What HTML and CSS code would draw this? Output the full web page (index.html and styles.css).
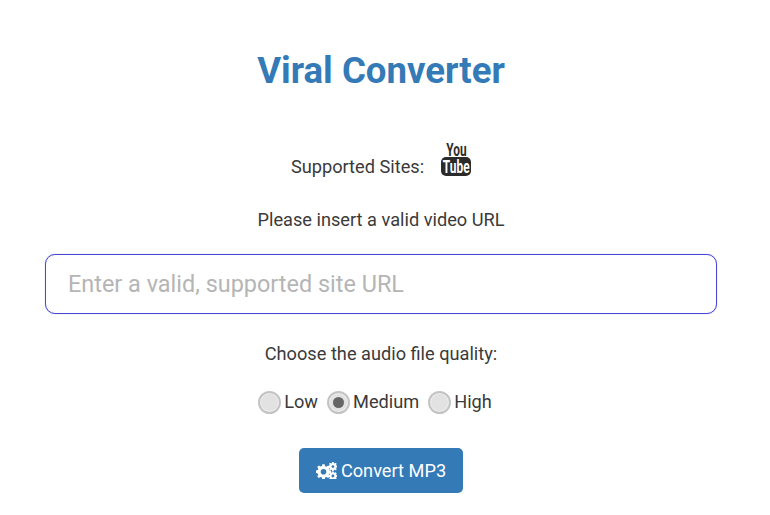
FILE: index.html
```html
<!DOCTYPE html>
<html lang="en">
<head>
<meta charset="utf-8">
<title>Viral Converter</title>
<link rel="stylesheet" href="styles.css">
</head>
<body>
<main class="page">
  <h1 class="title">Viral Converter</h1>
  <div class="sites">
    <span class="sites-label">Supported Sites:</span>
    <span class="yt" aria-label="YouTube">
      <span class="yt-you">You</span>
      <span class="yt-tube"><span class="yt-tube-text">Tube</span></span>
    </span>
  </div>
  <p class="hint">Please insert a valid video URL</p>
  <input class="url" type="text" placeholder="Enter a valid, supported site URL">
  <p class="choose">Choose the audio file quality:</p>
  <div class="quality">
    <label class="opt"><span class="radio"></span>Low</label>
    <label class="opt"><span class="radio checked"></span>Medium</label>
    <label class="opt"><span class="radio"></span>High</label>
  </div>
  <button class="convert" type="button">
    <svg class="cogs" viewBox="0 0 21 17" width="21" height="17" aria-hidden="true">
      <g fill="#fff" fill-rule="evenodd">
        <path d="M6.300 2.200h2.400l.4 2 1.300.5 1.700-1.100 1.700 1.700-1.100 1.700.5 1.300 2 .4V11l-2 .4-.5 1.300 1.100 1.700-1.700 1.700-1.700-1.100-1.300.5-.4 2H6.300l-.4-2-1.300-.5-1.700 1.100-1.700-1.700 1.100-1.700-.5-1.300-2-.4V8.500l2-.4.5-1.300-1.100-1.700 1.700-1.700 1.700 1.100 1.300-.5zM7.500 7a2.800 2.800 0 1 0 0 5.600 2.800 2.800 0 0 0 0-5.600z"/>
        <path d="M16.200 0h1.400l.3 1.100.8.300 1-.6 1 1-.6 1 .3.800 1.100.3v1.400l-1.100.3-.3.800.6 1-1 1-1-.6-.8.300-.3 1.100h-1.400l-.3-1.100-.8-.3-1 .6-1-1 .6-1-.3-.8-1.100-.3V3.900l1.100-.3.3-.8-.6-1 1-1 1 .6.800-.3zM16.900 3.200a1.400 1.400 0 1 0 0 2.800 1.400 1.400 0 0 0 0-2.800z"/>
        <path d="M16.200 9.400h1.400l.3 1.100.8.300 1-.6 1 1-.6 1 .3.800 1.100.3v1.400l-1.100.3-.3.800.6 1-1 .7h-6.400l-.1-.7.6-1-.3-.8-1.100-.3v-1.400l1.100-.3.3-.8-.6-1 1-1 1 .6.800-.3zM16.900 12.600a1.400 1.400 0 1 0 0 2.800 1.400 1.400 0 0 0 0-2.800z"/>
      </g>
    </svg>
    Convert MP3
  </button>
</main>
</body>
</html>
```
FILE: styles.css
```css
* { box-sizing: border-box; }
html, body { margin: 0; background: #fff; }
body {
  font-family: Roboto, "Liberation Sans", sans-serif;
  font-size: 18.2px;
  line-height: 24px;
  color: #3a3a3a;
  overflow: hidden;
}
.page {
  width: 762px;
  height: 515px;
  padding: 0 45px;
  display: flex;
  flex-direction: column;
  align-items: center;
}
.title {
  margin: 49px 0 0;
  font-size: 36.6px;
  line-height: 44px;
  font-weight: 700;
  color: #337ab7;
}
.sites {
  margin-top: 50px;
  height: 33px;
  display: flex;
  align-items: flex-end;
  gap: 17px;
}
.sites-label { margin-bottom: -3px; }
.yt {
  width: 30px;
  display: flex;
  flex-direction: column;
  align-items: center;
  font-weight: 700;
  color: #2b2b2b;
}
.yt-you {
  font-size: 18px;
  line-height: 14px;
  transform: scaleX(0.66);
}
.yt-tube {
  width: 30px;
  height: 19px;
  background: #2b2b2b;
  color: #fff;
  border-radius: 5px;
  font-size: 18px;
  line-height: 19px;
  display: flex;
  justify-content: center;
  overflow: hidden;
}
.yt-tube-text { transform: scaleX(0.66); }
.hint { margin: 32px 0 0; }
.url {
  margin-top: 22px;
  width: 672px;
  height: 60px;
  flex: none;
  padding: 0 22px;
  border: 1px solid #4848d6;
  border-radius: 10px;
  box-shadow: 0 0 1px rgba(72, 72, 214, 0.6);
  font: 23.45px Roboto, "Liberation Sans", sans-serif;
  color: #333;
  outline: none;
}
.url::placeholder { color: #b5b5b5; opacity: 1; }
.choose { margin: 28px 0 0; }
.quality {
  margin-top: 24px;
  margin-right: 12px;
  display: flex;
  gap: 9px;
}
.opt { display: flex; align-items: center; gap: 3px; }
.radio {
  width: 23px;
  height: 23px;
  border-radius: 50%;
  border: 2px solid #c4c4c4;
  background: #e2e2e2;
  box-shadow: inset 0 0 0 1px #eeeeee;
  display: flex;
  align-items: center;
  justify-content: center;
}
.radio.checked::before {
  content: "";
  width: 11px;
  height: 11px;
  border-radius: 50%;
  background: #666;
}
.convert {
  margin-top: 34px;
  width: 164px;
  height: 45px;
  border: 0;
  border-radius: 5px;
  background: #337ab7;
  color: #fff;
  font: 18.2px Roboto, "Liberation Sans", sans-serif;
  display: flex;
  align-items: center;
  justify-content: center;
  gap: 4px;
}
```
